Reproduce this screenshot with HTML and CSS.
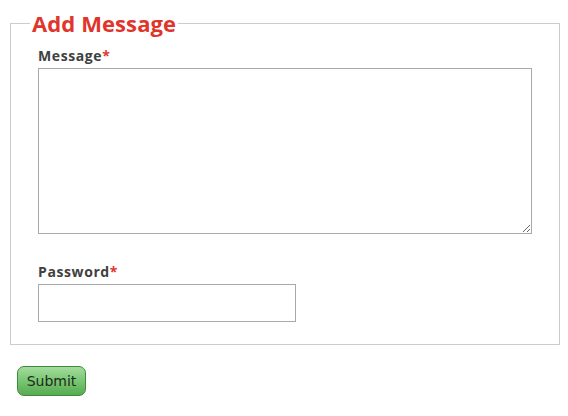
FILE: index.html
```html
<!DOCTYPE html>
<html>
<head>
<meta charset="utf-8">
<link rel="stylesheet" href="styles.css">
</head>
<body>
<form class="form">
  <fieldset class="box">
    <legend class="box-title">Add Message</legend>
    <div class="field field-msg">
      <label class="label" for="msg">Message<span class="req">*</span></label>
      <textarea class="textarea" id="msg"></textarea>
    </div>
    <div class="field field-pass">
      <label class="label" for="pw">Password<span class="req">*</span></label>
      <input class="input" id="pw" type="password">
    </div>
  </fieldset>
  <div class="actions">
    <button class="submit" type="button">Submit</button>
  </div>
</form>
</body>
</html>
```

FILE: styles.css
```css
html, body {
  margin: 0;
  padding: 0;
  background: #ffffff;
}
body {
  font-family: "Open Sans", "DejaVu Sans", sans-serif;
}
.form {
  padding: 10px 8px 0 10px;
}
.box {
  margin: 0;
  border: 1px solid #cccccc;
  padding: 0 27px 22px 27px;
  min-width: 0;
}
.box-title {
  margin-left: -8px;
  padding: 0 2px;
  font-family: "Open Sans", sans-serif;
  font-weight: 700;
  font-size: 22px;
  line-height: 26px;
  color: #e0352b;
  letter-spacing: 0.1px;
}
.field {
  display: flex;
  flex-direction: column;
}
.field-msg {
  margin-top: 10px;
}
.field-pass {
  margin-top: 28px;
}
.label {
  font-family: "Open Sans", sans-serif;
  font-weight: 700;
  font-size: 14px;
  line-height: 20px;
  color: #404040;
  height: 20px;
  margin-bottom: 2px;
  letter-spacing: 0.6px;
}
.req {
  color: #e0352b;
}
.textarea {
  box-sizing: border-box;
  width: 494px;
  height: 166px;
  margin: 0;
  border: 1px solid #a9a9a9;
  padding: 2px;
  resize: both;
}
.input {
  box-sizing: border-box;
  width: 258px;
  height: 38px;
  margin: 0;
  border: 1px solid #a9a9a9;
  padding: 2px;
}
.actions {
  padding: 21px 0 0 7px;
}
.submit {
  box-sizing: border-box;
  width: 69px;
  height: 30px;
  border: 1px solid #3f8a3c;
  border-radius: 7px;
  background: linear-gradient(to bottom, #a3dc9d 0%, #78c672 50%, #56ab50 100%);
  font-family: "DejaVu Sans", Verdana, sans-serif;
  font-size: 14px;
  color: #1d2b1c;
  padding: 0;
  cursor: pointer;
}
```
